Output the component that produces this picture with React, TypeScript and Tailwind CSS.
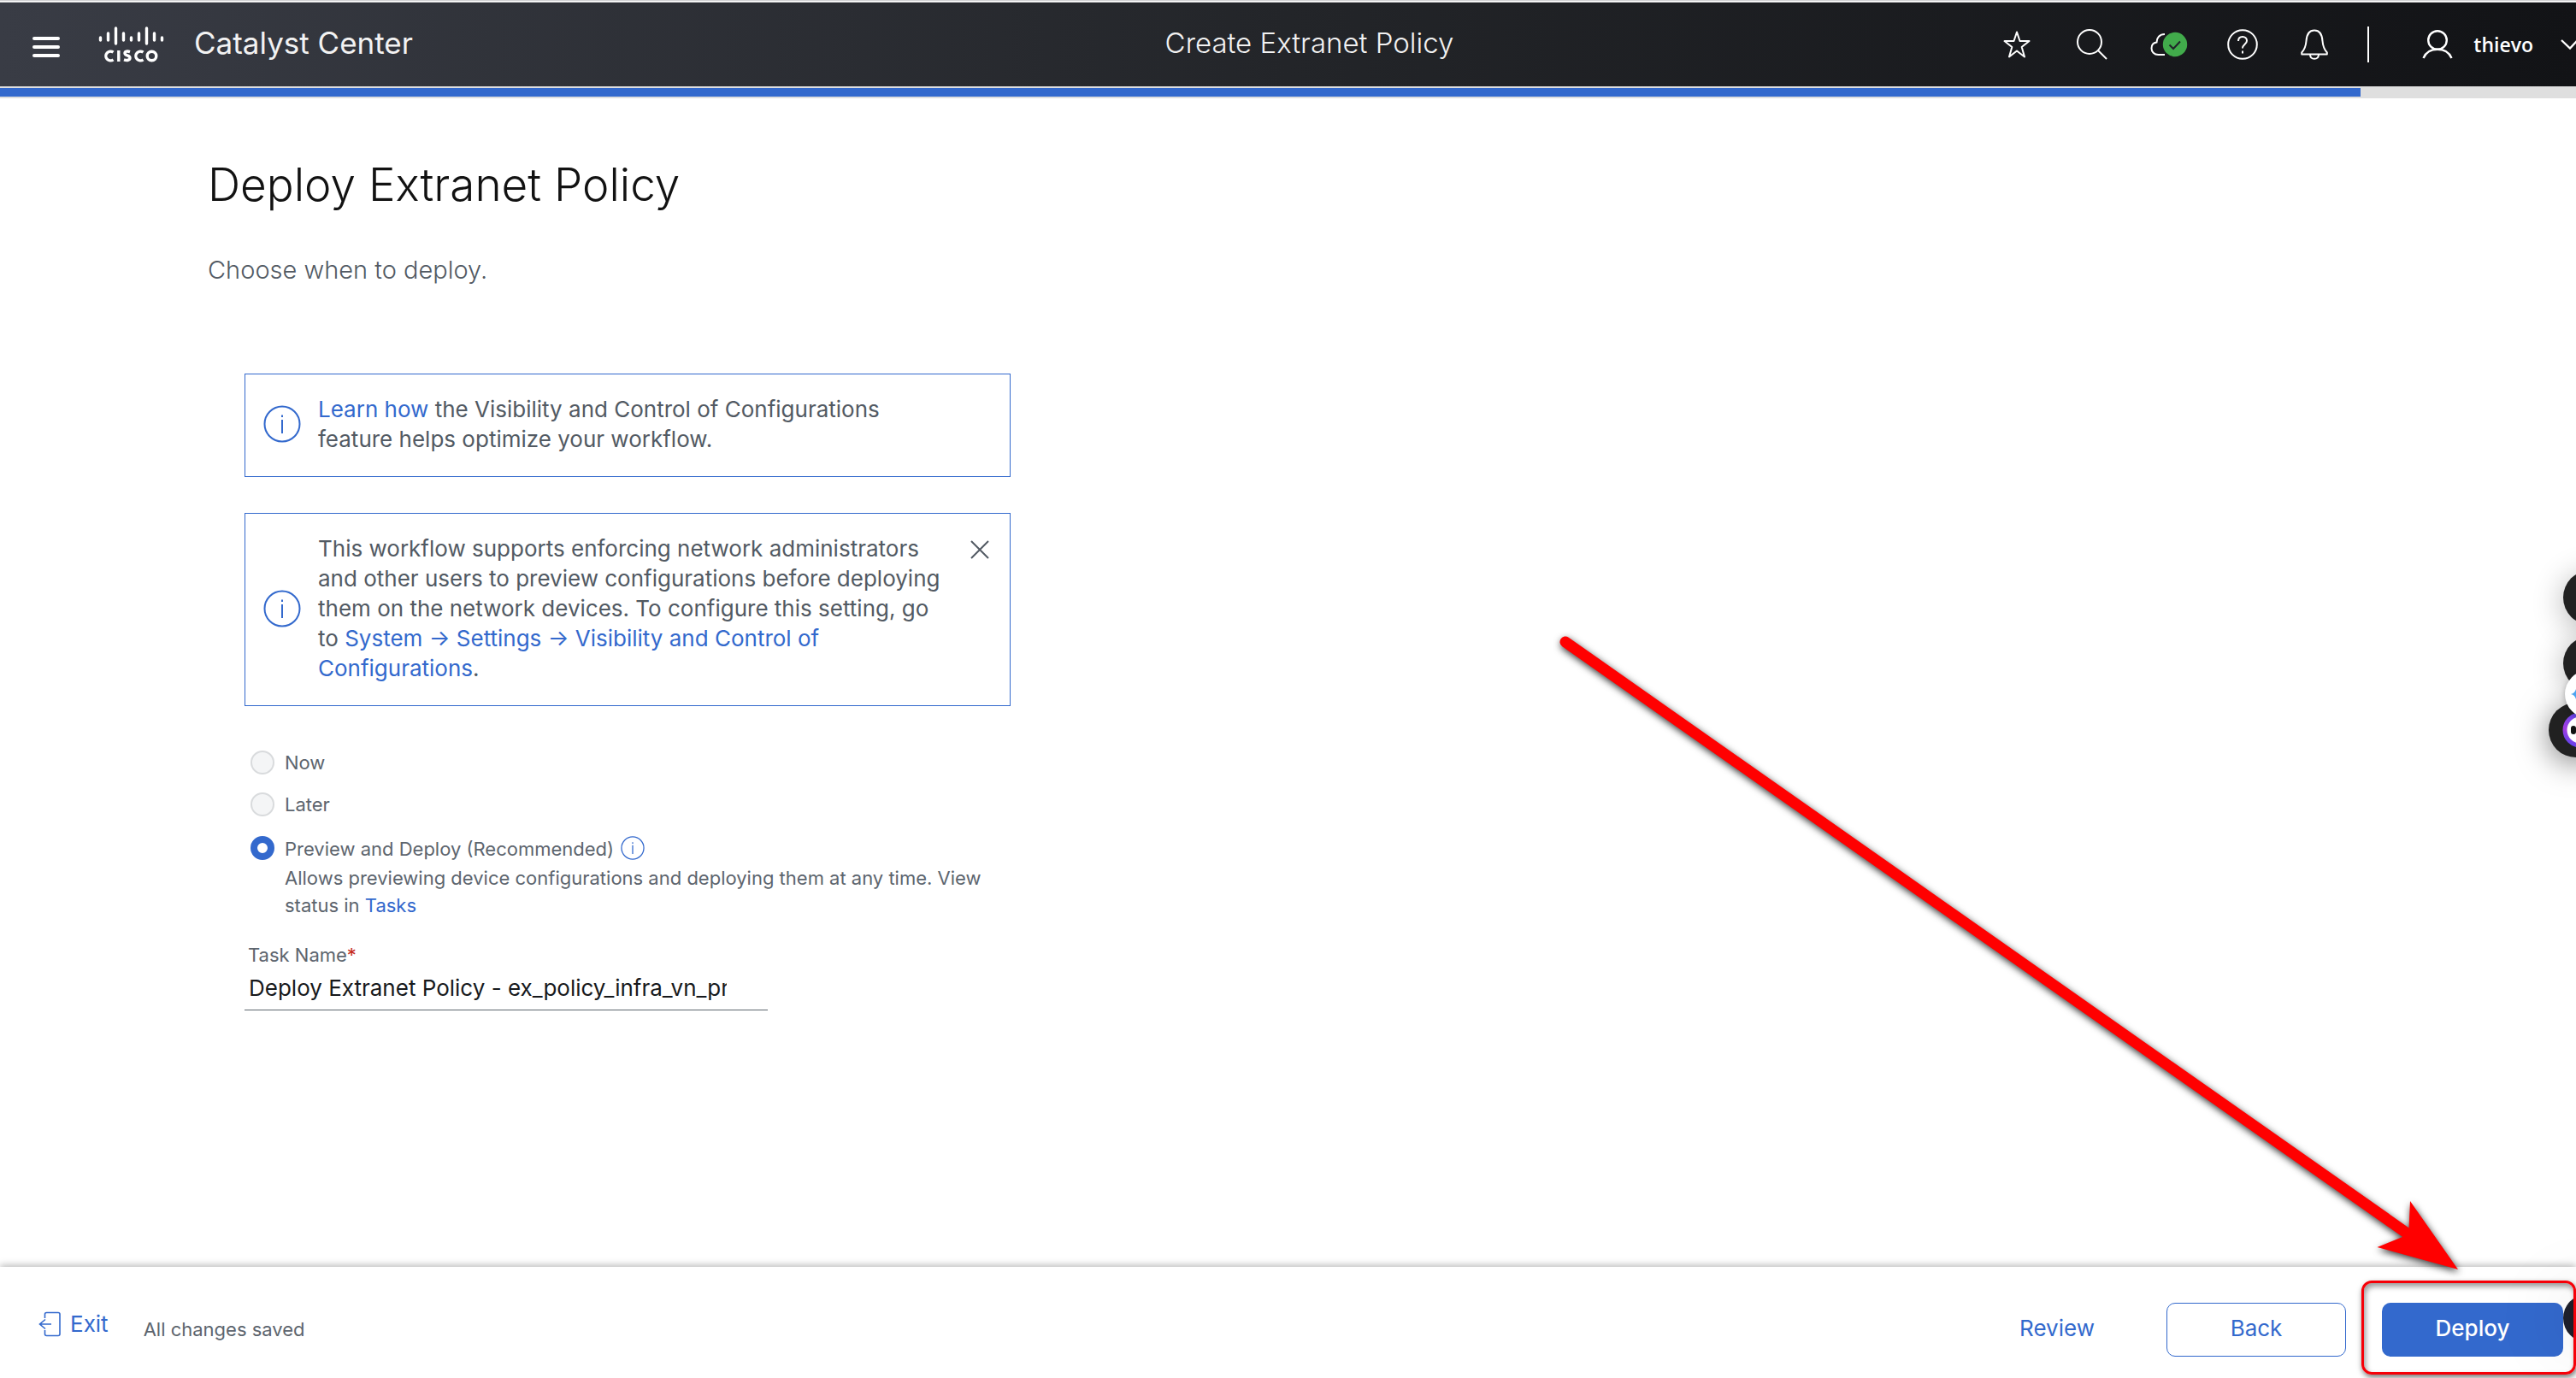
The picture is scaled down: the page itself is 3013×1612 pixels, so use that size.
import React from "react";

function InfoIcon({ className }: { className: string }) {
  return (
    <svg viewBox="0 0 44 44" fill="none" stroke="currentColor" strokeWidth="2" className={className} aria-hidden="true">
      <circle cx="22" cy="22" r="20.5" />
      <path d="M22 17v16M22 11.5v2.5" />
    </svg>
  );
}

function CiscoLogo() {
  return (
    <svg viewBox="0 0 78 42" className="h-[42px] w-[78px] shrink-0" fill="none" stroke="#fff" role="img" aria-label="Cisco">
      <g strokeWidth="3.4" strokeLinecap="round">
        <path d="M2.5 13v3M11.500 8v8M20.500 2v18M29.500 8v8M38.500 13v3M47.500 8v8M56.500 2v18M65.500 8v8M74.500 13v3" />
      </g>
      <g strokeWidth="3.4">
        <path d="M17.500 30.200a5.400 5.400 0 1 0 0 8.600" />
        <path d="M23.800 28v13" />
        <path d="M37 29.600c-3-1-6-.6-6 1.700 0 3.400 6 1.700 6 5.500 0 2.700-3.500 3.200-7 2" />
        <path d="M52.500 30.200a5.400 5.400 0 1 0 0 8.600" />
        <circle cx="62.500" cy="34.500" r="5.300" />
      </g>
    </svg>
  );
}

const iconButton = "flex shrink-0 items-center justify-center text-white";

function Header() {
  return (
    <header className="grid h-[98px] grid-cols-[1fr_auto_1fr] items-center bg-linear-to-r from-[#393c45] via-[#232529] to-[#121316] text-white">
      <div className="flex items-center pl-[38px]">
        <button type="button" aria-label="Menu" className="mt-1.5 flex w-8 flex-col gap-1.5">
          <span className="h-1 rounded-full bg-white" />
          <span className="h-1 rounded-full bg-white" />
          <span className="h-1 rounded-full bg-white" />
        </button>
        <span className="ml-[45px]">
          <CiscoLogo />
        </span>
        <span className="mb-1 ml-[34px] text-[35px] leading-10 whitespace-nowrap text-[#f2f2f2]">Catalyst Center</span>
      </div>
      <span className="mb-1 ml-[50px] text-[33px] leading-10 font-light whitespace-nowrap text-[#f2f2f2]">Create Extranet Policy</span>
      <div className="flex items-center justify-end overflow-hidden">
        <button type="button" aria-label="Favorites" className={iconButton}>
          <svg viewBox="0 0 32 32" className="h-8 w-8" fill="none" stroke="currentColor" strokeWidth="2" strokeLinejoin="round">
            <path d="M16 1.500l3.500 10.500h11l-8.800 7 3.300 11.500-9-7-9 7 3.300-11.500L1.500 12h11z" />
          </svg>
        </button>
        <button type="button" aria-label="Search" className={iconButton + " ml-[54px]"}>
          <svg viewBox="0 0 36 36" className="h-9 w-9" fill="none" stroke="currentColor" strokeWidth="2">
            <circle cx="15" cy="15" r="14" />
            <path d="M25 25l10 10" />
          </svg>
        </button>
        <button type="button" aria-label="Cloud status" className={iconButton + " ml-[50px]"}>
          <svg viewBox="0 0 44 30" className="h-[30px] w-11" fill="none" strokeWidth="2">
            <path stroke="currentColor" d="M17 27H9.500C4.500 27 1.500 23.500 1.500 19.500c0-4 2.500-6.500 6-7C7.500 7 11 3 17 3" />
            <circle cx="29" cy="15" r="14.200" fill="#41ab4b" />
            <path stroke="#20242a" d="M22.500 15.500l4.500 4.500 8-8.500" />
          </svg>
        </button>
        <button type="button" aria-label="Help" className={iconButton + " ml-[46px]"}>
          <svg viewBox="0 0 36 36" className="h-9 w-9" fill="none" stroke="currentColor" strokeWidth="2">
            <circle cx="18" cy="18" r="16.800" />
            <path d="M13 14c0-3.200 2.200-5 5-5s5 1.800 5 4.700c0 4-5 4.300-5 8.800M18 25.500v3" />
          </svg>
        </button>
        <button type="button" aria-label="Notifications" className={iconButton + " ml-[50px]"}>
          <svg viewBox="0 0 32 36" className="h-9 w-8" fill="none" stroke="currentColor" strokeWidth="2" strokeLinejoin="round">
            <path d="M1.200 29.500v-2C4.500 24 6 20 6.500 14 7 6 10 1.500 16 1.500S25 6 25.500 14c.5 6 2 10 5.300 13.500v2z" />
            <path d="M11 30c.2 3 2 4.800 5 4.800s4.800-1.800 5-4.800" />
          </svg>
        </button>
        <span className="ml-[46px] h-[42px] w-0.5 bg-white" />
        <button type="button" className="ml-[62px] flex items-center">
          <svg viewBox="0 0 36 34" className="h-[34px] w-9" fill="none" stroke="currentColor" strokeWidth="2.400" aria-hidden="true">
            <circle cx="18" cy="12" r="10.800" />
            <path d="M1.500 33C4.500 26 10.500 22.800 18 22.800S31.500 26 34.500 33" />
          </svg>
          <span className="ml-6 font-['Open_Sans',sans-serif] text-[23px] leading-8 font-semibold">thievo</span>
          <svg viewBox="0 0 18 12" className="ml-8 h-3 w-[18px]" fill="none" stroke="currentColor" strokeWidth="2.400" aria-hidden="true">
            <path d="M1 1l10 9.500L20 1" />
          </svg>
        </button>
      </div>
    </header>
  );
}

function Notice({ children, closable }: { children: React.ReactNode; closable?: boolean }) {
  return (
    <div className="flex items-center border border-[#3369cd] pt-[23px] pr-6 pb-[26px] pl-[21px] text-[26px] leading-[35px] text-[#525a63]">
      <InfoIcon className="h-11 w-11 shrink-0 text-[#3369cd]" />
      <p className="ml-5 w-[738px]">{children}</p>
      {closable && (
        <button type="button" aria-label="Close" className="mt-2 ml-auto self-start text-[#525a63]">
          <svg viewBox="0 0 22 22" className="h-[22px] w-[22px]" stroke="currentColor" strokeWidth="2">
            <path d="M1 1l20 20M21 1L1 21" />
          </svg>
        </button>
      )}
    </div>
  );
}

const radio =
  "h-7 w-7 shrink-0 appearance-none rounded-full border-2 border-[#d9dbdd] bg-[#f4f5f6] checked:border-8 checked:border-[#3369cd] checked:bg-white";

function DeployForm() {
  return (
    <form className="mt-[101px] ml-[43px] w-[896px] text-[22px] leading-8 text-[#5d656e]">
      <Notice>
        <a href="#learn" className="text-[#3369cd]">Learn how</a> the Visibility and Control of Configurations feature helps optimize your workflow.
      </Notice>
      <div className="mt-[42px]">
        <Notice closable>
          This workflow supports enforcing network administrators and other users to preview configurations before deploying them on the network devices. To configure this setting, go to{" "}
          <a href="#settings" className="text-[#3369cd]">System → Settings → Visibility and Control of Configurations</a>.
        </Notice>
      </div>
      <div className="mt-[50px] ml-[7px]">
        <div className="flex items-center">
          <input id="now" name="when" type="radio" disabled className={radio} />
          <label htmlFor="now" className="pl-3">Now</label>
        </div>
        <div className="mt-[17px] flex items-center">
          <input id="later" name="when" type="radio" disabled className={radio} />
          <label htmlFor="later" className="pl-3">Later</label>
        </div>
        <div className="mt-4 flex h-[38px] items-center">
          <input id="preview" name="when" type="radio" defaultChecked className={radio} />
          <label htmlFor="preview" className="pt-0.5 pl-3">Preview and Deploy (Recommended)</label>
          <InfoIcon className="ml-2 h-7 w-7 text-[#3369cd]" />
        </div>
        <p className="ml-10 w-[840px]">
          Allows previewing device configurations and deploying them at any time. View status in{" "}
          <a href="#tasks" className="text-[#3369cd]">Tasks</a>
        </p>
      </div>
      <div className="mt-[26px] w-[612px]">
        <label htmlFor="task" className="block pl-1">
          Task Name<span className="text-[#c4281b]">*</span>
        </label>
        <div className="border-b border-[#5d656e] pr-12 pb-1 pl-[5px]">
          <input id="task" type="text" defaultValue="Deploy Extranet Policy - ex_policy_infra_vn_prod" className="block h-11 w-full text-[26px] text-[#17191c] outline-none" />
        </div>
      </div>
    </form>
  );
}

function Footer() {
  return (
    <footer className="relative mt-auto flex h-[130px] items-center bg-white pr-[15px] pl-[45px] text-[26px] text-[#3369cd] shadow-[0_-2px_8px_rgba(0,0,0,0.28)]">
      <button type="button" className="mt-1 flex items-center">
        <svg viewBox="0 0 26 30" className="h-[30px] w-[26px]" fill="none" stroke="currentColor" strokeWidth="1.600" aria-hidden="true">
          <path d="M7.500 8V3.500a2 2 0 0 1 2-2H23a2 2 0 0 1 2 2v23a2 2 0 0 1-2 2H9.500a2 2 0 0 1-2-2V22M15 15H1.500M8 9.500L1.500 15 8 20.500" />
        </svg>
        <span className="mb-0.5 ml-[11px]">Exit</span>
      </button>
      <span className="mt-4 ml-[41px] text-[22px] text-[#5d656e]">All changes saved</span>
      <button type="button" className="mt-3 ml-auto">Review</button>
      <button type="button" className="mt-[17px] ml-[84px] h-[63px] w-[210px] rounded-[10px] border border-[#3369cd] pb-1">Back</button>
      <button type="button" className="mt-[17px] ml-[42px] h-[63px] w-[212px] rounded-[10px] bg-[#3369cd] pb-1 font-medium text-white">Deploy</button>
    </footer>
  );
}

function FloatingWidgets() {
  return (
    <div className="pointer-events-none absolute inset-0 overflow-hidden">
      <span className="absolute top-[667px] -right-[49px] h-16 w-16 rounded-full bg-[#212121] shadow-[0_6px_36px_rgba(0,0,0,0.3)]" />
      <span className="absolute top-[744px] -right-[49px] h-16 w-16 rounded-full bg-[#212121] shadow-[0_6px_36px_rgba(0,0,0,0.3)]" />
      <span className="absolute top-[822px] -right-8 h-16 w-16 rounded-full bg-[#212121] shadow-[0_6px_36px_rgba(0,0,0,0.5)]" />
      <svg viewBox="0 0 40 44" className="absolute top-[832px] -right-6 h-11 w-10">
        <defs>
          <linearGradient id="ring" x1="0" y1="1" x2="0.600" y2="0">
            <stop offset="0" stopColor="#4f46f0" />
            <stop offset="0.400" stopColor="#a33be0" />
            <stop offset="1" stopColor="#5a4af0" />
          </linearGradient>
        </defs>
        <circle cx="21" cy="22" r="18" fill="#fff" stroke="url(#ring)" strokeWidth="5" />
        <rect x="10" y="17" width="6" height="10" rx="3" fill="#111" />
      </svg>
      <span className="absolute top-[784px] -right-[43px] h-14 w-14 rounded-full bg-white shadow-[0_2px_6px_rgba(0,0,0,0.25)]" />
      <svg viewBox="0 0 12 12" className="absolute top-[806px] -right-1.5 h-3 w-3" fill="#4aa3f0">
        <path d="M0 6c3.500-.6 5-2.500 6-6 1 3.500 2.500 5.400 6 6-3.500.6-5 2.500-6 6-1-3.500-2.500-5.400-6-6z" />
      </svg>
      <span className="absolute -right-[41px] bottom-[42px] h-14 w-14 rounded-full bg-[#1d1f2b] shadow-[0_0_90px_rgba(0,0,0,0.15)]" />
    </div>
  );
}

function Annotation() {
  return (
    <div className="pointer-events-none absolute inset-0 overflow-hidden">
      <svg viewBox="0 0 1080 780" className="absolute right-[123px] bottom-[102px] h-[780px] w-[1080px] drop-shadow-[1px_3px_4px_rgba(0,0,0,0.8)]">
        <path d="M21 21L1010 716" stroke="#f00" strokeWidth="13" strokeLinecap="round" />
        <path d="M1065 755L1009 675 1007.500 707 1000 717 970.500 729z" fill="#f00" />
      </svg>
      <span className="absolute right-0 bottom-1 h-[110px] w-[251px] rounded-xl border-[3px] border-[#f60008] shadow-[1px_3px_6px_rgba(0,0,0,0.55),inset_2px_4px_6px_rgba(0,0,0,0.4)]" />
    </div>
  );
}

export default function App() {
  return (
    <div className="relative flex min-h-screen flex-col bg-white font-[Inter,sans-serif]">
      <div className="h-[3px] border-y border-[#cfcfd1] bg-white" />
      <Header />
      <div className="h-3.5 bg-[#dfdfdf] py-0.5">
        <div className="h-2.5 w-[91.640%] bg-[#3369cd]" />
      </div>
      <main className="pt-[69px] pl-[243px]">
        <h1 className="text-[53px] leading-[64px] font-light text-[#121212]">Deploy Extranet Policy</h1>
        <p className="mt-12 text-[29px] leading-10 font-light text-[#525a63]">Choose when to deploy.</p>
        <DeployForm />
      </main>
      <Footer />
      <FloatingWidgets />
      <Annotation />
    </div>
  );
}
